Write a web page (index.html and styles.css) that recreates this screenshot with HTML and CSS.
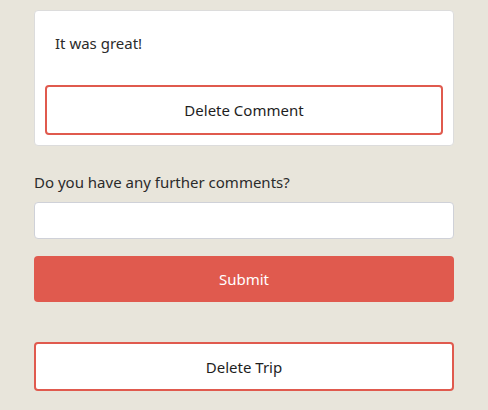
FILE: index.html
```html
<!DOCTYPE html>
<html>
<head>
<meta charset="utf-8">
<link rel="stylesheet" href="styles.css">
</head>
<body>
<div class="page">
  <div class="card">
    <p class="comment">It was great!</p>
    <button class="btn btn-outline">Delete Comment</button>
  </div>
  <label class="label" for="c">Do you have any further comments?</label>
  <input class="input" id="c" type="text">
  <button class="btn btn-solid">Submit</button>
  <button class="btn btn-outline trip">Delete Trip</button>
</div>
</body>
</html>
```

FILE: styles.css
```css
* { box-sizing: border-box; }
html, body { margin: 0; padding: 0; }
body {
  background: #e8e5db;
  font-family: "Noto Sans", "Open Sans", sans-serif;
  font-size: 15px;
  color: #2b2b2b;
}
.page {
  width: 420px;
  margin: 0 auto;
  padding-top: 10px;
  display: flex;
  flex-direction: column;
}
.card {
  background: #fff;
  border: 1px solid #dcdcdc;
  border-radius: 4px;
  padding: 10px;
  display: flex;
  flex-direction: column;
}
.comment {
  margin: 0 0 20px;
  padding: 10px 10px 10px;
  line-height: 24px;
}
.btn {
  font-family: inherit;
  font-size: 15px;
  border-radius: 4px;
  cursor: pointer;
  width: 100%;
}
.btn-outline {
  background: #fff;
  border: 2px solid #e05a4e;
  color: #1e1e1e;
  height: 50px;
}
.btn-solid {
  background: #e05a4e;
  border: none;
  color: #fff;
  height: 46px;
  margin-top: 17px;
}
.label {
  margin-top: 24px;
  line-height: 24px;
}
.input {
  margin-top: 8px;
  height: 37px;
  border: 1px solid #cfd1d8;
  border-radius: 4px;
  background: #fff;
}
.trip {
  margin-top: 40px;
  height: 49px;
}
```
